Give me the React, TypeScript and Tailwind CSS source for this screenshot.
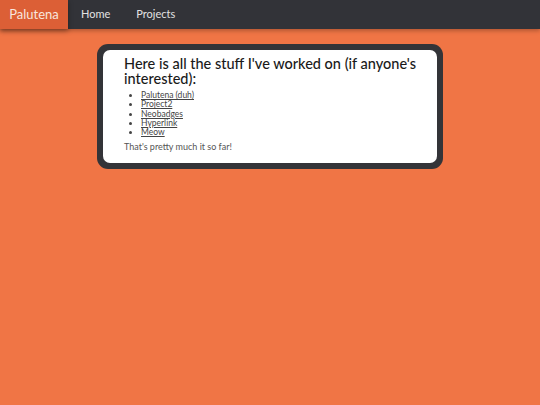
const projects = ['Palutena (duh)', 'Project2', 'Neobadges', 'Hyperlink', 'Meow'];

export default function App() {
  return (
    <div
      className="min-h-[405px] bg-[#f07545] text-[#333]"
      style={{ fontFamily: '"Lato", "Noto Sans", sans-serif' }}
    >
      <nav className="flex h-[29px] items-stretch bg-[#323338] shadow-[0_2px_4px_rgba(0,0,0,0.25)]">
        <a className="flex w-[68px] items-center justify-center bg-[#dc5f36] text-[13px] text-[#f8e6de] shadow-[0_2px_5px_rgba(0,0,0,0.35)]">
          Palutena
        </a>
        <a className="flex items-center px-[13px] text-[11px] text-[#e2e2e2]">Home</a>
        <a className="flex items-center px-[13px] text-[11px] text-[#e2e2e2]">Projects</a>
      </nav>

      <main className="flex justify-center pt-[15px]">
        <section className="w-[346px] rounded-[11px] bg-[#333438] p-[6px]">
          <div className="rounded-[7px] bg-white pt-[6px] pr-[20px] pb-[11px] pl-[21px]">
            <h1 className="text-[14.5px] leading-[15px] font-medium text-[#1a1a1a]">
              Here is all the stuff I've worked on (if anyone's interested):
            </h1>
            <ul className="mt-[5px] list-disc pl-[17px] text-[8.5px] leading-[9.3px] text-[#444]">
              {projects.map((p) => (
                <li key={p}>
                  <a className="underline">{p}</a>
                </li>
              ))}
            </ul>
            <p className="mt-[5px] text-[9px] leading-[10px] text-[#555]">That's pretty much it so far!</p>
          </div>
        </section>
      </main>
    </div>
  );
}
